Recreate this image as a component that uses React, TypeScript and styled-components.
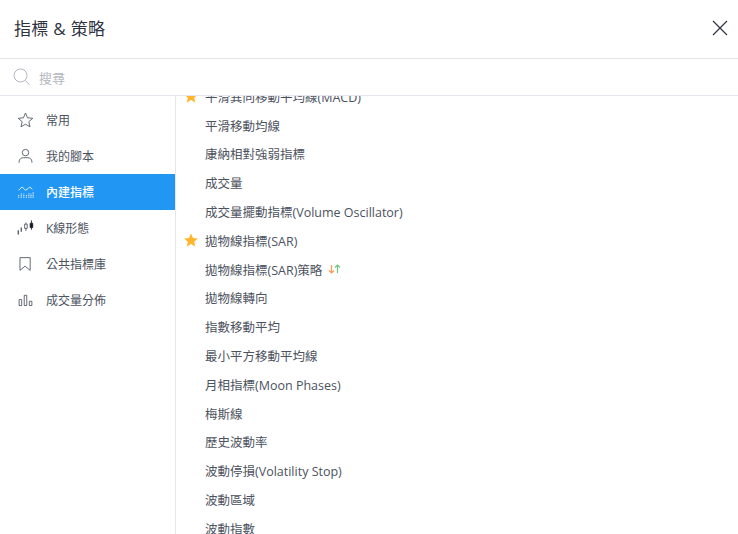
import React from 'react';
import styled, { createGlobalStyle } from 'styled-components';

const GlobalStyle = createGlobalStyle`
  html, body {
    margin: 0;
    padding: 0;
    background: #fff;
  }
  * {
    box-sizing: border-box;
  }
`;

const Dialog = styled.div`
  width: 738px;
  height: 534px;
  display: flex;
  flex-direction: column;
  overflow: hidden;
  background: #fff;
  color: #4c525e;
  font-family: "Open Sans", "Noto Sans CJK TC", sans-serif;
`;

const Header = styled.header`
  height: 59px;
  flex: none;
  display: flex;
  align-items: center;
  justify-content: space-between;
  padding: 0 9px 3px 14px;
  border-bottom: 1px solid #e6e6ef;
`;

const Title = styled.h1`
  margin: 0;
  font-size: 17px;
  font-weight: 400;
  letter-spacing: 0.3px;
  color: #2f3341;
`;

const CloseButton = styled.button`
  width: 18px;
  height: 18px;
  padding: 0;
  border: 0;
  background: none;
  color: #2f3341;
  display: flex;
`;

const SearchBar = styled.div`
  height: 37px;
  flex: none;
  display: flex;
  align-items: center;
  gap: 9px;
  padding: 0 13px;
  border-bottom: 1px solid #e6e6ef;
  color: #b4b7c0;
  font-size: 13px;
`;

const Body = styled.div`
  flex: 1;
  min-height: 0;
  display: flex;
`;

const Sidebar = styled.nav`
  width: 176px;
  flex: none;
  padding-top: 6px;
  border-right: 1px solid #e6e6ef;
`;

const NavItem = styled.div<{ $active?: boolean }>`
  height: 36px;
  display: flex;
  align-items: center;
  gap: 12px;
  padding-left: 17px;
  font-size: 12px;
  font-weight: ${p => (p.$active ? 500 : 400)};
  color: ${p => (p.$active ? '#fff' : '#4c525e')};
  background: ${p => (p.$active ? '#2196f3' : 'transparent')};
`;

const NavIcon = styled.span`
  width: 17px;
  height: 20px;
  flex: none;
  display: flex;
  align-items: center;
  justify-content: center;
`;

const ListArea = styled.div`
  flex: 1;
  min-width: 0;
  overflow: hidden;
`;

const List = styled.ul`
  list-style: none;
  margin: -14px 0 0;
  padding: 0;
`;

const Row = styled.li`
  height: 28.8px;
  display: flex;
  align-items: center;
  font-size: 12.5px;
  color: #4c525e;
`;

const StarSlot = styled.span`
  width: 29px;
  flex: none;
  display: flex;
  justify-content: center;
  padding-left: 1px;
`;

const StrategyMark = styled.span`
  display: flex;
  margin-left: 6px;
`;

const Star = () => (
  <svg width="14" height="14" viewBox="0 0 14 14">
    <path fill="#ffb52e" d="M7 .6l2 4.4 4.8.5-3.6 3.2 1 4.7L7 11l-4.2 2.4 1-4.7L.2 5.5 5 5z" />
  </svg>
);

const rows: { label: string; star?: boolean; strategy?: boolean }[] = [
  { label: '平滑異同移動平均線(MACD)', star: true },
  { label: '平滑移動均線' },
  { label: '康納相對強弱指標' },
  { label: '成交量' },
  { label: '成交量擺動指標(Volume Oscillator)' },
  { label: '拋物線指標(SAR)', star: true },
  { label: '拋物線指標(SAR)策略', strategy: true },
  { label: '拋物線轉向' },
  { label: '指數移動平均' },
  { label: '最小平方移動平均線' },
  { label: '月相指標(Moon Phases)' },
  { label: '梅斯線' },
  { label: '歷史波動率' },
  { label: '波動停損(Volatility Stop)' },
  { label: '波動區域' },
  { label: '波動指數' },
];

const StrokeSvg = ({ children }: { children: React.ReactNode }) => (
  <svg width="20" height="20" viewBox="0 0 20 20" fill="none" stroke="currentColor" strokeWidth="1">
    {children}
  </svg>
);

const navItems: { label: string; active?: boolean; icon: React.ReactNode }[] = [
  {
    label: '常用',
    icon: (
      <StrokeSvg>
        <path d="M10 1.8l2.4 5.6 6.1.6-4.6 4 1.4 6L10 15l-5.3 3 1.4-6-4.6-4 6.1-.6z" />
      </StrokeSvg>
    ),
  },
  {
    label: '我的腳本',
    icon: (
      <StrokeSvg>
        <circle cx="10" cy="6" r="3.8" />
        <path d="M2.5 18v-1.5c0-3 2.5-4.5 5-4.5h5c2.5 0 5 1.5 5 4.5V18" />
      </StrokeSvg>
    ),
  },
  {
    label: '內建指標',
    active: true,
    icon: (
      <StrokeSvg>
        <path d="M2 8l4-4 4 4 3-2 2-2 3 3" />
        <path d="M2 17v-4M5 17v-6M8 17v-5M11 17v-4M14 17v-6M16.500 17v-5M19 17v-7" strokeDasharray="1.500 .5" />
      </StrokeSvg>
    ),
  },
  {
    label: 'K線形態',
    icon: (
      <StrokeSvg>
        <path d="M1.500 12.500v5M5 9.500v5" strokeWidth="1.500" />
        <path d="M9 5.500h3v5H9zM10.500 3.500v2M10.500 10.500v3" />
        <path fill="#131722" stroke="#131722" d="M15.500 4.500h3v5h-3z" />
        <path stroke="#131722" d="M17 1v3.500M17 9.500V12" />
      </StrokeSvg>
    ),
  },
  {
    label: '公共指標庫',
    icon: (
      <StrokeSvg>
        <path d="M3.500 2.500h12v15l-6-5-6 5z" />
      </StrokeSvg>
    ),
  },
  {
    label: '成交量分佈',
    icon: (
      <StrokeSvg>
        <path d="M2.500 9.500h3v7h-3zM8.500 4.500h3v12h-3zM14.500 11.500h3v5h-3z" />
      </StrokeSvg>
    ),
  },
];

const App: React.FC = () => {
  return (
    <Dialog>
      <GlobalStyle />
      <Header>
        <Title>指標 &amp; 策略</Title>
        <CloseButton aria-label="關閉">
          <svg width="18" height="18" viewBox="0 0 18 18" fill="none" stroke="currentColor" strokeWidth="1.200">
            <path d="M2 2l14 14M16 2L2 16" />
          </svg>
        </CloseButton>
      </Header>
      <SearchBar>
        <svg width="17" height="18" viewBox="0 0 17 18" fill="none" stroke="#b4b7c0" strokeWidth="1">
          <circle cx="7.500" cy="7.500" r="6.500" />
          <path d="M12.500 12.500l4 4.500" />
        </svg>
        搜尋
      </SearchBar>
      <Body>
        <Sidebar>
          {navItems.map(item => (
            <NavItem key={item.label} $active={item.active}>
              <NavIcon>{item.icon}</NavIcon>
              {item.label}
            </NavItem>
          ))}
        </Sidebar>
        <ListArea>
          <List>
            {rows.map(row => (
              <Row key={row.label}>
                <StarSlot>{row.star && <Star />}</StarSlot>
                {row.label}
                {row.strategy && (
                  <StrategyMark>
                    <svg width="13" height="10" viewBox="0 0 13 10" fill="none" strokeWidth="1.200">
                      <path stroke="#ff9850" d="M3.500 1v8M1 6.500L3.500 9 6 6.500" />
                      <path stroke="#70c880" d="M9.500 9V1M7 3.500L9.500 1 12 3.500" />
                    </svg>
                  </StrategyMark>
                )}
              </Row>
            ))}
          </List>
        </ListArea>
      </Body>
    </Dialog>
  );
};

export default App;
